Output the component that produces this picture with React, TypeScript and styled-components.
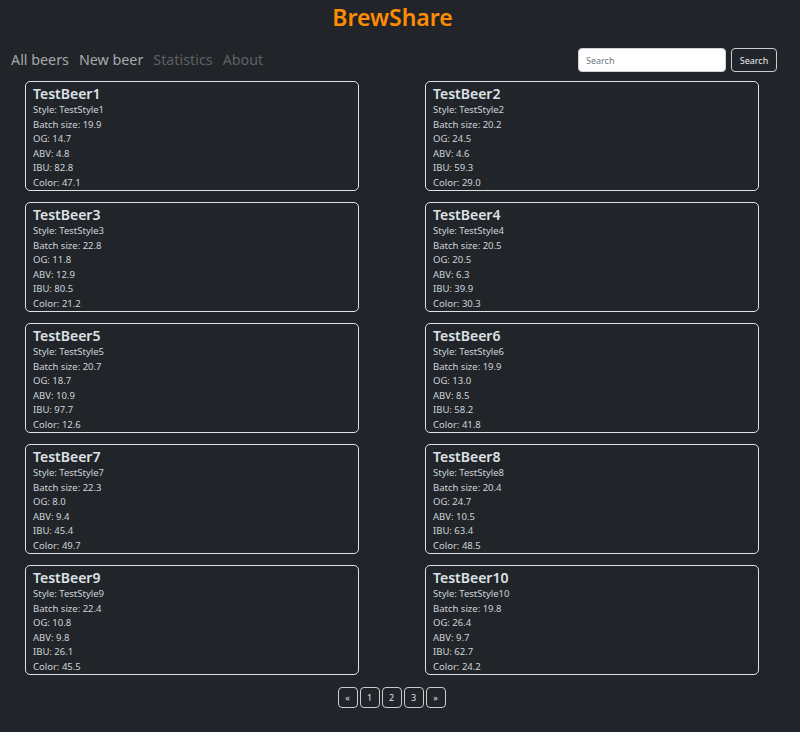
import React from "react";
import styled, { createGlobalStyle } from "styled-components";

const Global = createGlobalStyle`
  html, body { margin: 0; padding: 0; background: #212529; }
  body { font-family: "Noto Sans", "DejaVu Sans", sans-serif; color: #dee2e6; }
  * { box-sizing: border-box; }
`;

const Page = styled.div`
  width: 800px;
  min-height: 732px;
  background: #212529;
`;

const Header = styled.header`
  display: flex;
  flex-direction: column;
`;

const Title = styled.h1`
  margin: 0;
  padding: 2px 15px 0 0;
  height: 48px;
  text-align: center;
  font-size: 23px;
  font-weight: 600;
  color: #ff8c00;
  line-height: 30px;
`;

const NavBar = styled.div`
  display: flex;
  align-items: center;
  justify-content: space-between;
  padding: 0 23px 0 11px;
  height: 24px;
`;

const Links = styled.nav`
  display: flex;
  gap: 10px;
`;

const NavLink = styled.a<{ $dim?: boolean }>`
  font-size: 14.3px;
  color: ${(p) => (p.$dim ? "#5d6165" : "#a6a9ac")};
  text-decoration: none;
  line-height: 24px;
`;

const SearchForm = styled.form`
  display: flex;
  gap: 5px;
`;

const SearchInput = styled.input`
  width: 148px;
  height: 24px;
  border: 1px solid #ced4da;
  border-radius: 4px;
  background: #fff;
  font-family: inherit;
  font-size: 9px;
  padding: 0 7px;
  &::placeholder { color: #6c757d; }
`;

const SearchButton = styled.button`
  height: 24px;
  width: 46px;
  border: 1px solid #c9cdd1;
  border-radius: 4px;
  background: #212529;
  color: #e9ecef;
  font-family: inherit;
  font-size: 9px;
  padding: 0;
`;

const Grid = styled.div`
  display: grid;
  grid-template-columns: 400px 400px;
  row-gap: 11px;
  margin-top: 9px;
`;

const Card = styled.div`
  margin-left: 25px;
  width: 334px;
  height: 110px;
  border: 1px solid #dee2e6;
  border-radius: 5px;
  padding: 3px 7px 0 7px;
`;

const CardTitle = styled.div`
  font-size: 14px;
  font-weight: 600;
  color: #dee2e6;
  line-height: 18px;
`;

const Line = styled.div`
  font-size: 9.5px;
  line-height: 14.6px;
  color: #ced4da;
`;

const Pager = styled.div`
  display: flex;
  justify-content: center;
  gap: 2px;
  padding-right: 17px;
  margin-top: 12px;
`;

const PageBtn = styled.button`
  width: 20px;
  height: 21px;
  border: 1px solid #c9cdd1;
  border-radius: 4px;
  background: #212529;
  color: #dee2e6;
  font-family: inherit;
  font-size: 9px;
  padding: 0;
`;

const beers = [
  ["TestBeer1", "TestStyle1", "19.9", "14.7", "4.8", "82.8", "47.1"],
  ["TestBeer2", "TestStyle2", "20.2", "24.5", "4.6", "59.3", "29.0"],
  ["TestBeer3", "TestStyle3", "22.8", "11.8", "12.9", "80.5", "21.2"],
  ["TestBeer4", "TestStyle4", "20.5", "20.5", "6.3", "39.9", "30.3"],
  ["TestBeer5", "TestStyle5", "20.7", "18.7", "10.9", "97.7", "12.6"],
  ["TestBeer6", "TestStyle6", "19.9", "13.0", "8.5", "58.2", "41.8"],
  ["TestBeer7", "TestStyle7", "22.3", "8.0", "9.4", "45.4", "49.7"],
  ["TestBeer8", "TestStyle8", "20.4", "24.7", "10.5", "63.4", "48.5"],
  ["TestBeer9", "TestStyle9", "22.4", "10.8", "9.8", "26.1", "45.5"],
  ["TestBeer10", "TestStyle10", "19.8", "26.4", "9.7", "62.7", "24.2"],
];

export default function App() {
  return (
    <Page>
      <Global />
      <Header>
        <Title>BrewShare</Title>
        <NavBar>
          <Links>
            <NavLink href="#">All beers</NavLink>
            <NavLink href="#">New beer</NavLink>
            <NavLink href="#" $dim>Statistics</NavLink>
            <NavLink href="#" $dim>About</NavLink>
          </Links>
          <SearchForm onSubmit={(e) => e.preventDefault()}>
            <SearchInput placeholder="Search" />
            <SearchButton type="submit">Search</SearchButton>
          </SearchForm>
        </NavBar>
      </Header>
      <Grid>
        {beers.map((b) => (
          <Card key={b[0]}>
            <CardTitle>{b[0]}</CardTitle>
            <Line>Style: {b[1]}</Line>
            <Line>Batch size: {b[2]}</Line>
            <Line>OG: {b[3]}</Line>
            <Line>ABV: {b[4]}</Line>
            <Line>IBU: {b[5]}</Line>
            <Line>Color: {b[6]}</Line>
          </Card>
        ))}
      </Grid>
      <Pager>
        <PageBtn>«</PageBtn>
        <PageBtn>1</PageBtn>
        <PageBtn>2</PageBtn>
        <PageBtn>3</PageBtn>
        <PageBtn>»</PageBtn>
      </Pager>
    </Page>
  );
}
